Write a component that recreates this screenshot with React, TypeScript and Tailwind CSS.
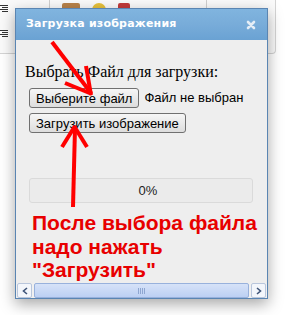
import React from 'react'

const sans = "font-['Liberation_Sans',Arial,sans-serif]"

function ListIcon() {
  return (
    <div className="flex flex-col gap-[1px]">
      {[0, 1, 2, 3].map(i => (
        <div key={i} className={`h-[1px] bg-[#333] ${i % 2 ? 'w-[6px] ml-[2px]' : 'w-[8px]'}`} />
      ))}
    </div>
  )
}

function Arrows() {
  return (
    <svg className="absolute inset-0 pointer-events-none" width="285" height="315" viewBox="0 0 285 315">
      <g stroke="#ff0000" strokeWidth="4" strokeLinecap="butt" fill="none">
        <line x1="52" y1="42" x2="91" y2="93" />
        <line x1="86" y1="66" x2="91" y2="95" />
        <line x1="65" y1="83" x2="92" y2="94" />
        <line x1="73" y1="207" x2="75" y2="128" />
        <line x1="62" y1="147" x2="75" y2="126" />
        <line x1="87" y1="147" x2="74" y2="126" />
      </g>
    </svg>
  )
}

function ScrollBar() {
  return (
    <div className="h-[15px] flex items-stretch gap-[2px] bg-[#f0f0f0] px-[1px]">
      <div className="w-[15px] border border-[#b9c6dc] rounded-[2px] bg-[#f3f6fb] flex items-center justify-center">
        <svg width="6" height="8" viewBox="0 0 6 8"><path d="M5 1 L1.5 4 L5 7" stroke="#3f5478" strokeWidth="1.6" fill="none" /></svg>
      </div>
      <div className="flex-1 border border-[#98b1dc] rounded-[2px] bg-gradient-to-b from-[#d6e2f8] to-[#bcd0f3] flex items-center justify-center gap-[1px]">
        {[0, 1, 2, 3].map(i => <div key={i} className="w-[1px] h-[6px] bg-[#8ea6d0]" />)}
      </div>
      <div className="w-[15px] border border-[#b9c6dc] rounded-[2px] bg-[#f3f6fb] flex items-center justify-center">
        <svg width="6" height="8" viewBox="0 0 6 8"><path d="M1 1 L4.5 4 L1 7" stroke="#3f5478" strokeWidth="1.6" fill="none" /></svg>
      </div>
    </div>
  )
}

export default function App() {
  return (
    <div className="relative w-[285px] h-[315px] overflow-hidden bg-white">
      {/* background toolbar */}
      <div className="h-[54px] w-[276px] border-r border-b border-[#d4d4d4] rounded-br-[4px] bg-[#fafafa] flex">
        <div className="w-[50px] border-r border-[#cfcfcf] pt-[5px] flex flex-col gap-[18px]">
          <ListIcon />
          <ListIcon />
        </div>
        <div className="w-[157px] border-r border-[#cfcfcf] flex gap-[12px] pl-[12px] pt-[3px]">
          <div className="w-[18px] h-[10px] bg-[#b8824a] rounded-[2px]" />
          <div className="w-[14px] h-[14px] bg-[#e6c13c] rounded-full" />
          <div className="w-[12px] h-[12px] bg-[#c23b3b] rounded-[2px]" />
        </div>
        <div className="flex gap-[14px] pl-[20px] pt-[4px] text-[#555] text-[10px]">
          <span>×</span>
          <span>⌂</span>
        </div>
      </div>

      {/* dialog */}
      <div className="absolute left-[15px] top-[8px] w-[253px] h-[291px] border border-[#5a85b2] bg-[#eeeeee] flex flex-col shadow-[0_5px_14px_rgba(0,0,0,0.35)]">
        <div className="h-[31px] shrink-0 bg-gradient-to-b from-[#80b4df] via-[#78acd9] to-[#6aa2d3] flex items-center justify-between pl-[10px] pr-[11px]">
          <span className="font-['DejaVu_Sans',Verdana,sans-serif] font-bold text-[11px] text-white tracking-[0.2px]">Загрузка изображения</span>
          <svg width="10" height="10" viewBox="0 0 10 10">
            <path d="M2 2 L8 8 M8 2 L2 8" stroke="#e4edf6" strokeWidth="2.6" strokeLinecap="round" />
          </svg>
        </div>

        <div className="flex-1 pl-[9px] pr-[10px]">
          <p className="mt-[23px] font-['Liberation_Serif','Times_New_Roman',serif] text-[16px] leading-[18px] text-black">Выбрать Файл для загрузки:</p>
          <div className={`mt-[7px] ml-[4px] flex items-center gap-[5px] ${sans} text-[13px]`}>
            <button className="h-[20px] px-[6px] border border-[#707070] rounded-[3px] bg-gradient-to-b from-[#f6f6f6] to-[#dddddd] text-black leading-none">Выберите файл</button>
            <span className="text-black">Файл не выбран</span>
          </div>
          <div className={`mt-[5px] ml-[4px] ${sans} text-[13px]`}>
            <button className="h-[20px] px-[6px] border border-[#707070] rounded-[3px] bg-gradient-to-b from-[#f6f6f6] to-[#dddddd] text-black leading-none">Загрузить изображение</button>
          </div>
          <div className={`mt-[45px] ml-[4px] mr-[4px] h-[25px] border border-[#dadada] rounded-[3px] bg-[#ebebeb] flex items-center justify-center pl-[14px] ${sans} text-[13px] text-[#222]`}>
            0%
          </div>
          <div className={`mt-[8px] ml-[7px] ${sans} font-bold text-[21px] leading-[23.5px] text-[#e80000] whitespace-nowrap`}>
            <div>После выбора файла</div>
            <div>надо нажать</div>
            <div>"Загрузить"</div>
          </div>
        </div>

        <ScrollBar />
      </div>

      <Arrows />
    </div>
  )
}
